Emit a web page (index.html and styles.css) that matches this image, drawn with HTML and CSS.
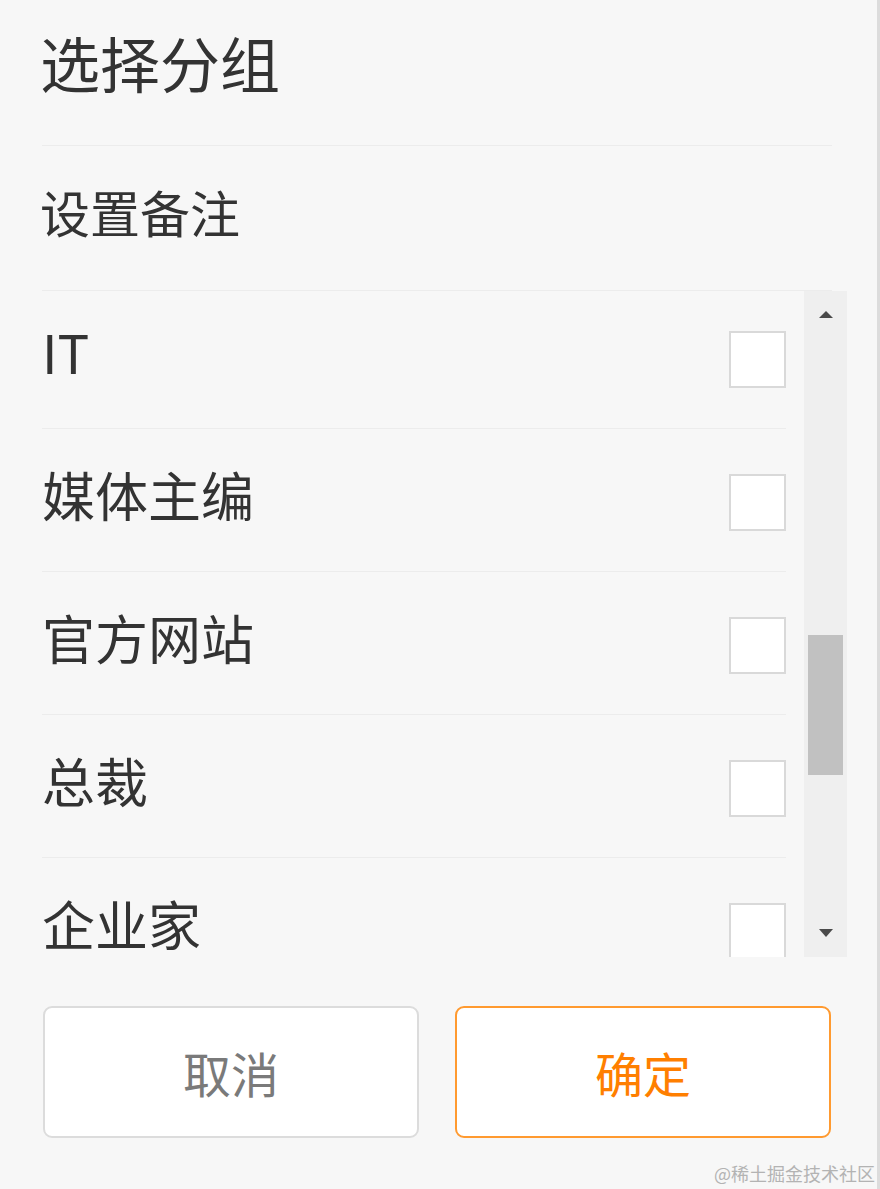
FILE: index.html
```html
<!DOCTYPE html>
<html lang="zh-CN">
<head>
<meta charset="utf-8">
<title>选择分组</title>
<link rel="stylesheet" href="styles.css">
</head>
<body>
<div class="sheet">
  <div class="head title">选择分组</div>
  <div class="head remark">设置备注</div>
  <div class="list">
    <div class="viewport">
      <ul class="items">
        <li class="item"><span class="label">IT</span><span class="check"></span></li>
        <li class="item"><span class="label">媒体主编</span><span class="check"></span></li>
        <li class="item"><span class="label">官方网站</span><span class="check"></span></li>
        <li class="item"><span class="label">总裁</span><span class="check"></span></li>
        <li class="item"><span class="label">企业家</span><span class="check"></span></li>
      </ul>
    </div>
    <div class="scrollbar">
      <span class="arrow up"></span>
      <div class="track"><div class="thumb"></div></div>
      <span class="arrow down"></span>
    </div>
  </div>
  <div class="actions">
    <button class="btn cancel">取消</button>
    <button class="btn ok">确定</button>
  </div>
  <div class="watermark">@稀土掘金技术社区</div>
</div>
</body>
</html>
```
FILE: styles.css
```css
* { box-sizing: border-box; }
html, body {
  margin: 0;
  padding: 0;
  background: #f7f7f7;
}
body {
  font-family: "Noto Sans CJK SC", "Noto Sans", "Liberation Sans", sans-serif;
  color: #333;
}
.sheet {
  position: relative;
  width: 880px;
  height: 1189px;
  box-shadow: inset -3px 0 0 #dcdcdc;
  overflow: hidden;
}
.head {
  margin: 0 48px 0 42px;
  border-bottom: 1px solid #ececec;
  font-weight: 400;
}
.title {
  height: 146px;
  font-size: 60px;
  line-height: 124px;
  text-indent: -2px;
}
.remark {
  height: 145px;
  font-size: 50px;
  line-height: 130px;
  text-indent: -2px;
}
.list {
  display: flex;
  height: 666px;
  margin: 0 33px 0 42px;
}
.viewport {
  flex: 1;
  overflow: hidden;
}
.items {
  list-style: none;
  margin: -5px 18px 0 0;
  padding: 0;
}
.item {
  display: flex;
  align-items: center;
  justify-content: space-between;
  height: 143px;
  border-bottom: 1px solid #ececec;
}
.label {
  font-size: 53px;
  line-height: 80px;
  margin: 0 0 12px 0;
}
.check {
  width: 57px;
  height: 57px;
  border: 2px solid #d9d9d9;
  background: #fff;
  margin-top: 4px;
}
.scrollbar {
  width: 43px;
  background: #efefef;
  display: flex;
  flex-direction: column;
  align-items: center;
}
.arrow {
  width: 0;
  height: 0;
  border-left: 7px solid transparent;
  border-right: 7px solid transparent;
}
.arrow.up {
  margin-top: 20px;
  border-bottom: 7px solid #4a4a4a;
}
.arrow.down {
  margin-bottom: 20px;
  border-top: 8px solid #4a4a4a;
}
.track {
  flex: 1;
  width: 100%;
  padding: 0 4px;
}
.thumb {
  margin-top: 317px;
  height: 140px;
  background: #c1c1c1;
}
.actions {
  display: flex;
  gap: 36px;
  margin: 49px 49px 0 43px;
}
.btn {
  flex: 1;
  height: 132px;
  border-radius: 9px;
  background: #fff;
  font-family: inherit;
  font-size: 48px;
  padding: 0;
  cursor: pointer;
}
.cancel {
  border: 2px solid #dcdcdc;
  color: #7a7a7a;
}
.ok {
  border: 2px solid #ff9a30;
  color: #ff7f00;
}
.watermark {
  position: absolute;
  right: 5px;
  bottom: 6px;
  font-size: 18px;
  line-height: 20px;
  color: #b3b3b3;
}
```
